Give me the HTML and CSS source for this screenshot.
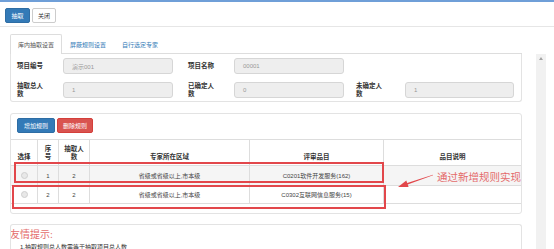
FILE: index.html
```html
<!DOCTYPE html>
<html lang="zh-CN">
<head>
<meta charset="utf-8">
<title>抽取设置</title>
<link rel="stylesheet" href="styles.css">
</head>
<body>
<div class="topline"></div>
<div class="toolbar">
  <button class="btn btn-primary btn-draw">抽取</button>
  <button class="btn btn-default btn-close">关闭</button>
</div>
<div class="tabs">
  <div class="tab active">库内抽取设置</div>
  <div class="tab">屏蔽规则设置</div>
  <div class="tab">自行选定专家</div>
</div>
<div class="frame">
  <div class="content">
    <div class="panel panel-info">
      <div class="label">项目编号</div>
      <div class="input">演示001</div>
      <div class="label label-2">项目名称</div>
      <div class="input">00001</div>
      <div></div>
      <div></div>

      <div class="label">抽取总人数</div>
      <div class="input">1</div>
      <div class="label label-2">已确定人数</div>
      <div class="input">0</div>
      <div class="label label-3">未确定人数</div>
      <div class="input">1</div>
    </div>

    <div class="panel panel-rules">
      <div class="rules-bar">
        <button class="btn btn-primary btn-add">增加规则</button>
        <button class="btn btn-danger btn-del">删除规则</button>
      </div>
      <table class="rules">
        <colgroup>
          <col class="c-sel"><col class="c-no"><col class="c-num"><col class="c-area"><col class="c-item"><col class="c-desc">
        </colgroup>
        <thead>
          <tr>
            <th>选择</th>
            <th>序号</th>
            <th>抽取人数</th>
            <th>专家所在区域</th>
            <th>评审品目</th>
            <th>品目说明</th>
          </tr>
        </thead>
        <tbody>
          <tr class="row-1">
            <td><span class="radio"></span></td>
            <td>1</td>
            <td>2</td>
            <td>省级或省级以上,市本级</td>
            <td>C0201软件开发服务(162)</td>
            <td></td>
          </tr>
          <tr class="row-2">
            <td><span class="radio"></span></td>
            <td>2</td>
            <td>2</td>
            <td>省级或省级以上,市本级</td>
            <td>C0302互联网信息服务(15)</td>
            <td></td>
          </tr>
        </tbody>
      </table>
    </div>

    <div class="panel panel-tips">
      <div class="tips-title">友情提示:</div>
      <div class="tips-line">1.抽取规则总人数需等于抽取项目总人数</div>
    </div>
  </div>
  <div class="scrollbar"><span class="scroll-up"></span></div>
</div>

<div class="mark mark-1"></div>
<div class="mark mark-2"></div>
<svg class="arrow" viewBox="0 0 45 20" width="45" height="20">
  <polygon points="3,17 11.3,10.4 12.2,13 38,4.8 38,5.3 12.7,14.5 13.6,17.1" fill="#e2474b"/>
</svg>
<div class="note">通过新增规则实现</div>
</body>
</html>
```

FILE: styles.css
```css
* { box-sizing: border-box; }
html, body { margin: 0; padding: 0; }
body {
  width: 554px;
  height: 249px;
  overflow: hidden;
  position: relative;
  background: #fff;
  color: #333;
  font-family: "Liberation Sans", "Noto Sans CJK SC", sans-serif;
  font-size: 6px;
}

.topline { height: 2px; background: #6f9fd8; }

.toolbar {
  display: flex;
  gap: 2px;
  padding: 6px 5px 3px;
  border-bottom: 1px solid #e6e6e6;
}

.btn {
  height: 15px;
  padding: 0;
  border: 1px solid;
  border-radius: 2px;
  font-family: inherit;
  font-size: 6px;
  display: flex;
  align-items: center;
  justify-content: center;
}
.btn-primary { background: #337ab7; border-color: #2e6da4; color: #fff; }
.btn-default { background: #fff; border-color: #ccc; color: #333; }
.btn-danger { background: #d9534f; border-color: #d43f3a; color: #fff; }
.btn-draw { width: 25px; }
.btn-close { width: 24px; }
.btn-add { width: 38px; }
.btn-del { width: 36px; }

.tabs {
  display: flex;
  height: 20px;
  margin: 7px 32px 0 10px;
  border-bottom: 1px solid #ddd;
}
.tab {
  padding: 0 7px;
  display: flex;
  align-items: center;
  color: #337ab7;
  border: 1px solid transparent;
  border-bottom: none;
}
.tab.active {
  color: #555;
  background: #fff;
  border-color: #ddd;
  border-radius: 2px 2px 0 0;
  height: 20px;
}

.frame { display: flex; height: 195px; overflow: hidden; }
.content { margin-left: 10px; width: 512px; }
.scrollbar {
  margin-left: 14px;
  width: 10px;
  background: #f1f1f1;
  position: relative;
}
.scroll-up {
  position: absolute;
  left: 3px;
  top: 3px;
  width: 0;
  height: 0;
  border-left: 2px solid transparent;
  border-right: 2px solid transparent;
  border-bottom: 3px solid #a3a3a3;
}

.panel { border: 1px solid #e3e3e3; border-radius: 3px; }

.panel-info {
  border-top: none;
  border-radius: 0 0 3px 3px;
  padding: 4px 7px 3px 6px;
  display: grid;
  grid-template-columns: 46px 110px 61px 110px 61px 109px;
  row-gap: 8px;
  align-items: center;
}
.label {
  font-weight: bold;
  font-size: 6.5px;
  line-height: 8px;
  padding-right: 16px;
}
.label-2 { padding-left: 15px; }
.label-3 { padding-left: 12px; padding-right: 19px; }
.input {
  height: 16px;
  background: #eee;
  border: 1px solid #d6d6d6;
  border-radius: 3px;
  padding-left: 8px;
  color: #999;
  display: flex;
  align-items: center;
}

.panel-rules { margin-top: 11px; padding-bottom: 9px; }
.rules-bar { display: flex; gap: 2px; padding: 4px 6px 6px; }

.rules {
  width: 100%;
  border-collapse: separate;
  border-spacing: 0;
  table-layout: fixed;
}
.c-sel { width: 26px; }
.c-no { width: 21px; }
.c-num { width: 31px; }
.c-area { width: 160px; }
.c-item { width: 134px; }
.c-desc { width: 138px; }

.rules th, .rules td {
  border-top: 1px solid #ddd;
  border-left: 1px solid #ddd;
  text-align: center;
  padding: 0 4px;
}
.rules th:first-child, .rules td:first-child { border-left: none; }
.rules th {
  height: 26px;
  vertical-align: bottom;
  padding-bottom: 4px;
  font-size: 6.5px;
  line-height: 8px;
  font-weight: bold;
}
.rules td { vertical-align: middle; color: #444; }
.row-1 td { height: 20px; background: #f5f5f5; }
.row-2 td { height: 19px; border-bottom: 1px solid #ddd; }

.radio {
  display: inline-block;
  width: 7px;
  height: 7px;
  border-radius: 50%;
  background: #e8e8e8;
  border: 1px solid #cfcfcf;
  vertical-align: middle;
}

.panel-tips {
  margin-top: 10px;
  border-bottom: none;
  border-radius: 3px 3px 0 0;
  padding-top: 3px;
  height: 26px;
  overflow: hidden;
}
.tips-title {
  margin-left: -1px;
  font-family: "Liberation Serif", "Noto Sans CJK SC", serif;
  font-size: 10px;
  line-height: 13px;
  color: #e46c6c;
}
.tips-line {
  padding-left: 9px;
  margin-top: 2px;
  font-size: 6px;
  line-height: 8px;
}

.mark {
  position: absolute;
  border: 2px solid #e2474b;
}
.mark-1 { left: 14px; top: 162px; width: 370px; height: 21px; }
.mark-2 { left: 12px; top: 185px; width: 374px; height: 24px; }

.arrow {
  position: absolute;
  left: 395px;
  top: 170px;
}
.note {
  position: absolute;
  left: 437px;
  top: 170px;
  font-size: 10.5px;
  line-height: 14px;
  color: #e46a6a;
  white-space: nowrap;
}
```
